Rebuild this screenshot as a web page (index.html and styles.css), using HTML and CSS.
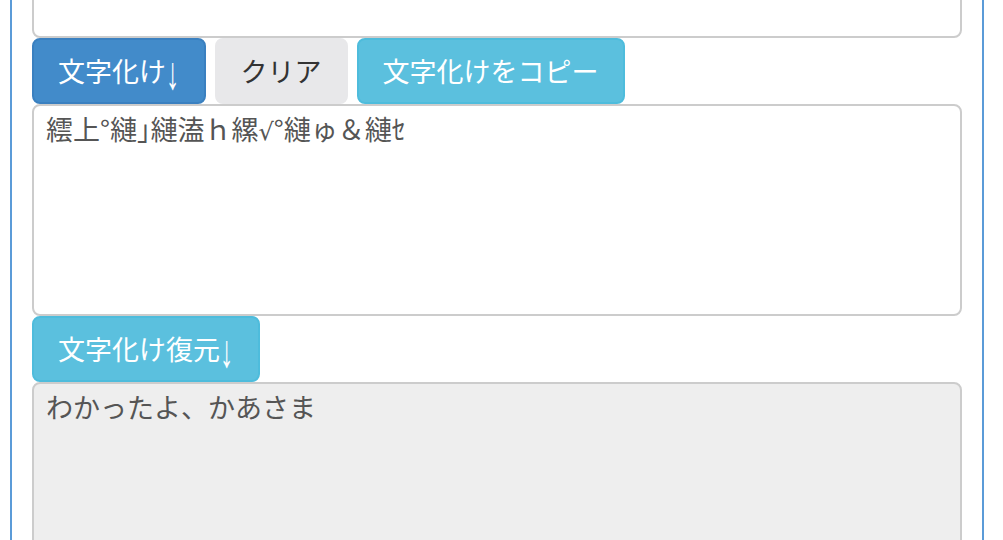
FILE: index.html
```html
<!DOCTYPE html>
<html lang="ja">
<head>
<meta charset="utf-8">
<title>文字化け</title>
<link rel="stylesheet" href="styles.css">
</head>
<body>
<div class="page">
  <div class="panel">
    <div class="field"></div>
    <div class="actions">
      <button class="btn btn-primary">文字化け<span class="arrow">↓</span></button>
      <button class="btn btn-default">クリア</button>
      <button class="btn btn-info">文字化けをコピー</button>
    </div>
    <div class="field">繧上°縺｣縺溘ｈ縲<span class="sym">√</span>°縺ゅ＆縺ｾ</div>
    <div class="actions">
      <button class="btn btn-info">文字化け復元<span class="arrow">↓</span></button>
    </div>
    <div class="field field-readonly">わかったよ、かあさま</div>
  </div>
</div>
</body>
</html>
```

FILE: styles.css
```css
html, body {
  margin: 0;
  padding: 0;
  background: #fff;
  overflow: hidden;
}

body {
  font-family: "Noto Sans CJK JP", "Noto Sans", sans-serif;
  color: #333;
}

.page {
  padding: 0 19px 0 10px;
}

.panel {
  margin-top: -174px;
  border-left: 2px solid #5b9bd8;
  border-right: 2px solid #5b9bd8;
  padding: 0 20px 40px 20px;
  display: flex;
  flex-direction: column;
}

.field {
  height: 212px;
  box-sizing: border-box;
  border: 2px solid #cccccc;
  border-radius: 8px;
  background: #fff;
  padding: 4px 12px;
  font-size: 27px;
  line-height: 38px;
  color: #555;
  white-space: nowrap;
  overflow: hidden;
}

.sym {
  font-family: "DejaVu Sans", sans-serif;
  font-size: 24px;
}

.field-readonly {
  background: #eeeeee;
  height: 260px;
}

.actions {
  display: flex;
  gap: 9px;
}

.btn {
  font-family: "Noto Sans CJK JP", "Noto Sans", sans-serif;
  font-size: 27px;
  line-height: 38px;
  height: 66px;
  box-sizing: border-box;
  padding: 12px 24px;
  border: 2px solid transparent;
  border-radius: 8px;
  cursor: pointer;
  white-space: nowrap;
}

.arrow {
  display: inline-block;
  font-family: "Liberation Sans", sans-serif;
  transform: translateY(1px) scaleY(1.7);
  transform-origin: center;
}

.btn-primary {
  background: #428bca;
  border-color: #3a80c0;
  color: #fff;
}

.btn-default {
  background: #e8e8ea;
  border-color: #e8e8ea;
  color: #333;
}

.btn-info {
  background: #5bc0de;
  border-color: #4ebcdc;
  color: #fff;
}
```
